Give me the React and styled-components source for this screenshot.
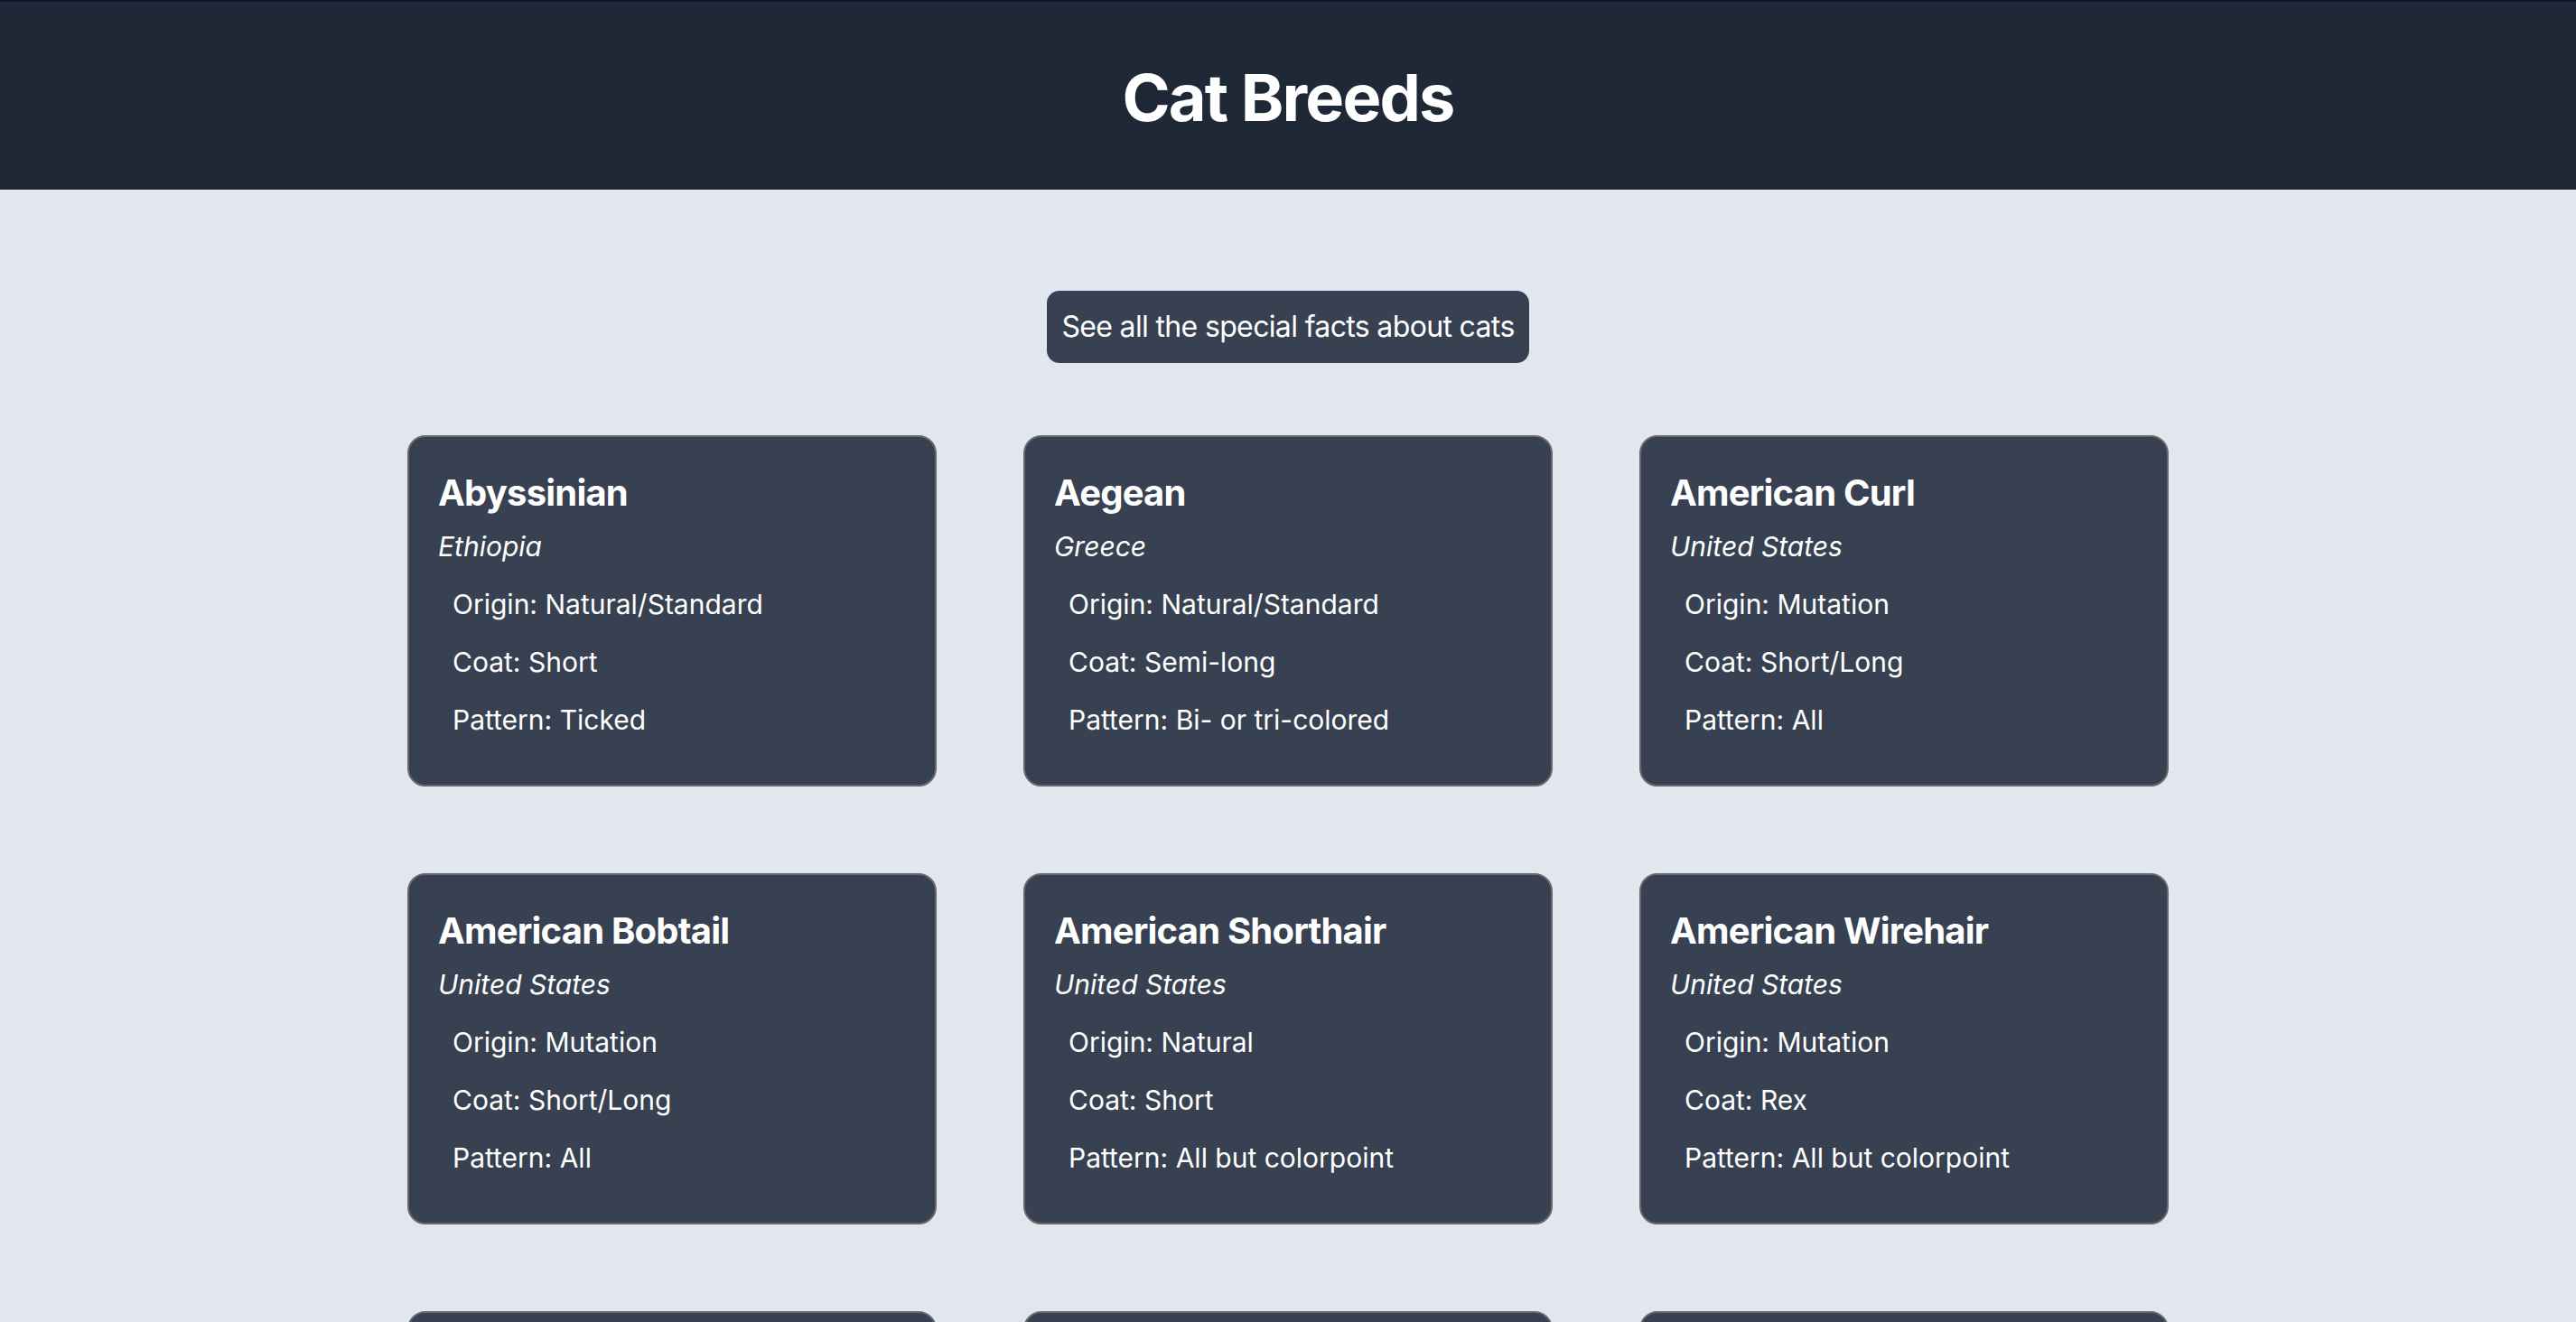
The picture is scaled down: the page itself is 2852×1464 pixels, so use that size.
import React from "react";
import styled, { createGlobalStyle } from "styled-components";

const GlobalStyle = createGlobalStyle`
  html, body {
    margin: 0;
    padding: 0;
    background: #e2e7ef;
    font-family: Inter, "Noto Sans", "Liberation Sans", sans-serif;
    color: #ffffff;
  }
  * { box-sizing: border-box; }
`;

const Header = styled.header`
  background: #1f2837;
  border-top: 2px solid #0e1a2b;
  padding: 66px 0 62px;
  text-align: center;
`;

const Title = styled.h1`
  margin: 0;
  font-size: 72px;
  line-height: 80px;
  font-weight: 700;
  letter-spacing: -1.8px;
  color: #ffffff;
`;

const Main = styled.main`
  padding: 112px 0 96px;
  display: flex;
  flex-direction: column;
  align-items: center;
`;

const FactsButton = styled.button`
  font-family: inherit;
  font-size: 32px;
  line-height: 48px;
  letter-spacing: -0.65px;
  padding: 16px;
  border: none;
  border-radius: 14px;
  background: #374151;
  color: #ffffff;
  cursor: pointer;
  margin-bottom: 80px;
`;

const Grid = styled.div`
  display: grid;
  grid-template-columns: repeat(3, 586px);
  column-gap: 96px;
  row-gap: 96px;
`;

const Card = styled.article`
  background: #374151;
  border: 2px solid #69696b;
  border-radius: 20px;
  padding: 32px;
`;

const BreedName = styled.h2`
  margin: 0;
  font-size: 40px;
  line-height: 60px;
  font-weight: 700;
  letter-spacing: -0.8px;
  color: #ffffff;
`;

const Country = styled.p`
  margin: 9px 0 0;
  font-size: 30px;
  line-height: 40px;
  font-style: italic;
  color: #ffffff;
`;

const Traits = styled.ul`
  list-style: none;
  margin: 20px 0 0;
  padding: 0 0 0 16px;
`;

const Trait = styled.li`
  font-size: 30px;
  line-height: 48px;
  margin-bottom: 16px;
  color: #ffffff;
`;

const breeds = [
  { name: "Abyssinian", country: "Ethiopia", origin: "Natural/Standard", coat: "Short", pattern: "Ticked" },
  { name: "Aegean", country: "Greece", origin: "Natural/Standard", coat: "Semi-long", pattern: "Bi- or tri-colored" },
  { name: "American Curl", country: "United States", origin: "Mutation", coat: "Short/Long", pattern: "All" },
  { name: "American Bobtail", country: "United States", origin: "Mutation", coat: "Short/Long", pattern: "All" },
  { name: "American Shorthair", country: "United States", origin: "Natural", coat: "Short", pattern: "All but colorpoint" },
  { name: "American Wirehair", country: "United States", origin: "Mutation", coat: "Rex", pattern: "All but colorpoint" },
  { name: "Arabian Mau", country: "Arabian Peninsula", origin: "Natural", coat: "Short", pattern: "" },
  { name: "Asian", country: "United Kingdom", origin: "", coat: "Short", pattern: "Evenly solid" },
  { name: "Asian Semi-longhair", country: "United Kingdom", origin: "Crossbreed", coat: "Semi-long", pattern: "Solid" },
];

export default function App() {
  return (
    <>
      <GlobalStyle />
      <Header>
        <Title>Cat Breeds</Title>
      </Header>
      <Main>
        <FactsButton>See all the special facts about cats</FactsButton>
        <Grid>
          {breeds.map((b) => (
            <Card key={b.name}>
              <BreedName>{b.name}</BreedName>
              <Country>{b.country}</Country>
              <Traits>
                <Trait>Origin: {b.origin}</Trait>
                <Trait>Coat: {b.coat}</Trait>
                <Trait>Pattern: {b.pattern}</Trait>
              </Traits>
            </Card>
          ))}
        </Grid>
      </Main>
    </>
  );
}
